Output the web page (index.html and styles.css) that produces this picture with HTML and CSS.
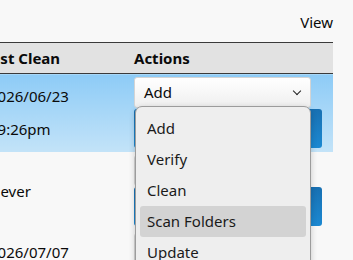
FILE: index.html
```html
<!DOCTYPE html>
<html lang="en">

<head>
    <meta charset="UTF-8">
    <meta name="viewport" content="width=device-width, initial-scale=1.0">
    <title>Folders</title>
    <link rel="stylesheet" href="styles.css">
</head>

<body>
    <div class="page">
        <div class="toolbar">
            <span class="view">View</span>
        </div>
        <div class="scroller">
            <table class="grid">
                <thead>
                    <tr>
                        <th class="col-clean">Last Clean</th>
                        <th class="col-actions">Actions</th>
                    </tr>
                </thead>
                <tbody>
                    <tr class="selected">
                        <td class="when">2026/06/23<br>09:26pm</td>
                        <td class="actions">
                            <div class="select">Add<span class="chev"></span></div>
                            <div class="go"></div>
                        </td>
                    </tr>
                    <tr>
                        <td class="when">Never</td>
                        <td class="actions">
                            <div class="select">Add<span class="chev"></span></div>
                            <div class="go"></div>
                        </td>
                    </tr>
                    <tr>
                        <td class="when">2026/07/07<br>08:02am</td>
                        <td class="actions">
                            <div class="select">Add<span class="chev"></span></div>
                            <div class="go"></div>
                        </td>
                    </tr>
                </tbody>
            </table>
        </div>

        <ul class="menu">
            <li>Add</li>
            <li>Verify</li>
            <li>Clean</li>
            <li class="hover">Scan Folders</li>
            <li>Update</li>
        </ul>
    </div>
</body>

</html>
```

FILE: styles.css
```css
* {
    margin: 0;
    padding: 0;
    list-style: none;
    box-sizing: border-box;
}

body {
    background-color: #f8f8f8;
    font-family: "Noto Sans", "Open Sans", sans-serif;
    font-size: 15px;
    color: #0a0a0a;
    overflow: hidden;
}

.page {
    position: relative;
    width: 353px;
    height: 260px;
}

.toolbar {
    width: 333px;
    height: 42px;
    display: flex;
    justify-content: flex-end;
    align-items: flex-start;
    padding-top: 11px;
}

.view {
    line-height: 22px;
}

.scroller {
    width: 333px;
    overflow: hidden;
}

.grid {
    margin-left: -17px;
    width: 350px;
    border-collapse: collapse;
    table-layout: fixed;
}

.grid th {
    height: 31px;
    background-color: #e2e2e2;
    border-top: 1px solid #3a3a3a;
    border-bottom: 1px solid #3a3a3a;
    text-align: left;
    font-weight: bold;
    padding: 0;
    line-height: 29px;
}

.col-clean {
    width: 151px;
}

.col-actions {
    width: 199px;
    border-right: 1px solid #9a9a9a;
}

.grid td {
    padding: 0;
    vertical-align: middle;
}

.selected td {
    background: linear-gradient(#8dcbf6, #c3e3f8);
}

.grid .when {
    line-height: 33px;
    padding-left: 6px;
}

.grid .actions {
    padding: 3px 0 4px 0;
}

.select {
    width: 177px;
    height: 31px;
    border: 1px solid #d4d4d4;
    border-radius: 3px;
    background: linear-gradient(#ffffff, #efefef);
    padding-left: 9px;
    line-height: 29px;
    position: relative;
}

.chev {
    position: absolute;
    right: 10px;
    top: 10px;
    width: 6px;
    height: 6px;
    border-right: 1.5px solid #222;
    border-bottom: 1.5px solid #222;
    transform: rotate(45deg);
}

.go {
    width: 188px;
    height: 39px;
    margin-top: 1px;
    border-radius: 3px;
    background: linear-gradient(#1870b2, #1c89d2);
}

.menu {
    position: absolute;
    left: 135px;
    top: 106px;
    width: 176px;
    height: 170px;
    background-color: #eeeeee;
    border: 1px solid #9c9c9c;
    border-radius: 7px;
    box-shadow: 0 2px 6px rgba(0, 0, 0, 0.2);
    padding: 6px 4px;
}

.menu li {
    height: 31px;
    line-height: 31px;
    padding-left: 7px;
    border-radius: 3px;
    color: #1a1a1a;
}

.menu .hover {
    background-color: #d3d3d3;
}
```
